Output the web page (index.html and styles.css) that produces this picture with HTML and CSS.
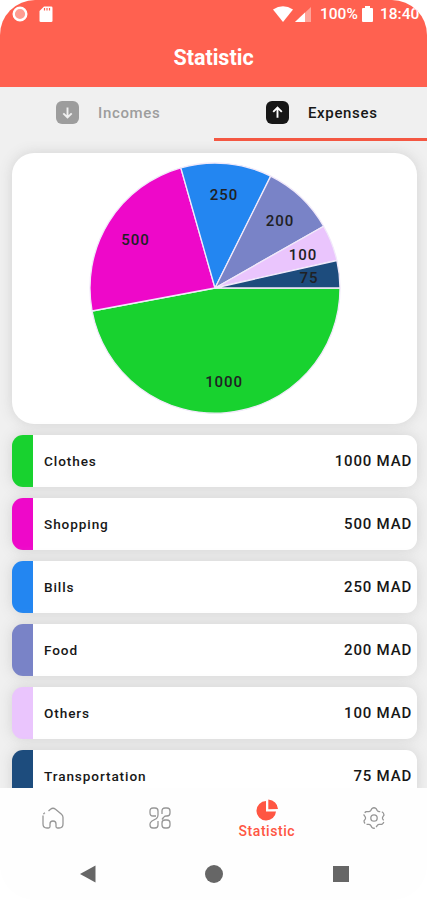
FILE: index.html
```html
<!DOCTYPE html>
<html lang="en">
<head>
<meta charset="utf-8">
<title>Statistic</title>
<link rel="stylesheet" href="styles.css">
</head>
<body>
<div class="phone">
  <header class="header">
    <div class="status">
      <svg width="16" height="16" viewBox="0 0 16 16"><circle cx="8" cy="8" r="6.3" fill="#ff9d92" stroke="#fff" stroke-width="2.4"/></svg>
      <svg class="sd" width="14" height="17" viewBox="0 0 14 17"><path d="M5 .5h7.2q1.3 0 1.3 1.3v12.9q0 1.3-1.3 1.3H1.8Q.5 16 .5 14.700V5z" fill="#fff"/><path d="M5.500 2v2.500M8 2v2.500M10.500 2v2.500" stroke="#ff6150" stroke-width="1.200"/></svg>
      <span class="spacer"></span>
      <svg width="20" height="16" viewBox="0 0 20 16"><path d="M0 3.500Q10-3 20 3.500L10 16z" fill="#fff"/></svg>
      <svg class="signal" width="16" height="15" viewBox="0 0 16 15"><path d="M16 0v15H0z" fill="#ffa398"/><path d="M10 5.600V15H0z" fill="#fff"/></svg>
      <span class="battery-text">100%</span>
      <svg class="battery" width="11" height="16" viewBox="0 0 11 16"><path d="M3 0h5v2h2q1 0 1 1v12q0 1-1 1H1q-1 0-1-1V3q0-1 1-1h2z" fill="#fff"/></svg>
      <span class="clock">18:40</span>
    </div>
    <h1 class="title">Statistic</h1>
  </header>
  <nav class="tabs">
    <div class="tab"><svg width="23" height="23" viewBox="0 0 23 23"><rect width="23" height="23" rx="6" fill="#9d9d9d"/><path d="M11.500 6.500v10M7.300 12.300l4.200 4.200 4.200-4.200" fill="none" stroke="#f0f0f0" stroke-width="1.900"/></svg><span>Incomes</span></div>
    <div class="tab active"><svg width="23" height="23" viewBox="0 0 23 23"><rect width="23" height="23" rx="6" fill="#171717"/><path d="M11.500 16.800V6.500M7.200 10.800l4.300-4.300 4.300 4.300" fill="none" stroke="#fff" stroke-width="1.900"/></svg><span>Expenses</span></div>
  </nav>
  <main class="content">
    <section class="chart">
      <svg width="252" height="252" viewBox="-126 -126 252 252">
        <g stroke="#f1e9fa" stroke-width="1.300" stroke-linejoin="bevel">
          <path fill="#18d22f" d="M0 0H125A125 125 0 0 1-122.900 23z"/>
          <path fill="#ee08c9" d="M0 0L-122.900 23A125 125 0 0 1-34.200-120.200z"/>
          <path fill="#2386f1" d="M0 0L-34.200-120.200A125 125 0 0 1 55.700-111.900z"/>
          <path fill="#7983c7" d="M0 0L55.700-111.900A125 125 0 0 1 108.600-61.800z"/>
          <path fill="#eac5fd" d="M0 0L108.600-61.800A125 125 0 0 1 121.900-27.500z"/>
          <path fill="#1d4c7d" d="M0 0L121.900-27.500A125 125 0 0 1 125 0z"/>
        </g>
        <g class="values">
          <text x="9" y="99">1000</text>
          <text x="-79.500" y="-43.500">500</text>
          <text x="9" y="-88">250</text>
          <text x="65" y="-62.500">200</text>
          <text x="88" y="-28.500">100</text>
          <text x="94" y="-5">75</text>
        </g>
      </svg>
    </section>
    <div class="row clothes"><span>Clothes</span><span class="amount">1000 MAD</span></div>
    <div class="row shopping"><span>Shopping</span><span class="amount">500 MAD</span></div>
    <div class="row bills"><span>Bills</span><span class="amount">250 MAD</span></div>
    <div class="row food"><span>Food</span><span class="amount">200 MAD</span></div>
    <div class="row others"><span>Others</span><span class="amount">100 MAD</span></div>
    <div class="row transport"><span>Transportation</span><span class="amount">75 MAD</span></div>
  </main>
  <nav class="bottom">
    <div class="item"><svg width="24" height="24" viewBox="0 0 24 24"><path d="M2 9.500V18q0 4 4 4h1.500q1.500 0 1.500-1.500V18q0-3 3-3t3 3v2.500q0 1.500 1.500 1.500H18q4 0 4-4v-6.500q0-2-1.500-3.300l-6-5Q12 1.300 9.500 3.200L7.500 5M2.500 8.300q.3-.8 1.500-1.500"/></svg></div>
    <div class="item"><svg width="24" height="24" viewBox="0 0 24 24"><path d="M8 10H5Q2 10 2 7V5q0-3 3-3h2q3 0 3 3v4q0 2-1.500 3.500L4 15q-2 1.500-2 3v1q0 3 3 3h2q3 0 3-3v-4M14 8V5q0-3 3-3h2q3 0 3 3v2q0 3-3 3h-1q-1.500 0-2.500 1.500L14 13.500M17 14h2q3 0 3 3v2q0 3-3 3h-2q-3 0-3-3v-2q0-3 3-3z"/></svg></div>
    <div class="item selected"><svg width="23" height="23" viewBox="0 0 23 23"><path d="M10 2v10.500h10A9.800 9.800 0 1 1 10 2zM12.300.5Q21 1.500 22 10l-9.700.2z"/></svg><span>Statistic</span></div>
    <div class="item"><svg width="24" height="24" viewBox="0 0 24 24"><circle cx="12" cy="12" r="3.200"/><path d="M10 2.500q2-1.500 4 0l1.300 2.200q.7 1 2 1h2.500q2 1 2.200 3.300l-1.300 2q-.5 1 0 2l1.300 2q-.2 2.300-2.200 3.300h-2.500q-1.300 0-2 1L14 21.500q-2 1.500-4 0l-1.300-2.200q-.7-1-2-1H4.200Q2.200 17.300 2 15l1.300-2q.5-1 0-2L2 9q.2-2.300 2.200-3.300h2.500q1.300 0 2-1z" stroke-dasharray="10 1.600"/></svg></div>
  </nav>
  <nav class="system">
    <div><svg width="16" height="18" viewBox="0 0 16 18"><path d="M15.500.5v17L0 9z"/></svg></div>
    <div><svg width="18" height="18" viewBox="0 0 18 18"><circle cx="9" cy="9" r="9"/></svg></div>
    <div><svg width="16" height="16" viewBox="0 0 16 16"><path d="M0 0h16v16H0z"/></svg></div>
  </nav>
</div>
</body>
</html>
```
FILE: styles.css
```css
* { box-sizing: border-box; }
body { margin: 0; background: #fff; font-family: Roboto, sans-serif; color: #171717; }
svg { display: block; flex: none; }
.phone { width: 427px; height: 900px; display: flex; flex-direction: column; overflow: hidden; border-radius: 35px; background: #fefefe; }
.header { height: 87px; flex: none; background: #ff6150; color: #fff; }
.status { height: 28px; display: flex; align-items: center; padding: 0 8px 0 12px; font-size: 15.5px; font-weight: 500; }
.sd { margin-left: 11px; }
.spacer { flex: 1; }
.signal { margin-left: 2px; }
.battery-text { margin-left: 9px; width: 37px; white-space: nowrap; }
.battery { margin-left: 5px; }
.clock { margin-left: 7px; width: 39px; white-space: nowrap; }
.title { margin: 15px 0 0; text-align: center; font-size: 21.500px; line-height: 30px; font-weight: 700; }
.tabs { height: 54px; flex: none; display: flex; background: #f0f0f0; }
.tab { flex: 1 1 0; min-width: 0; display: flex; align-items: center; gap: 19px; padding-left: 56px; color: #9d9d9d; font-size: 15px; font-weight: 500; letter-spacing: .65px; border-bottom: 3px solid transparent; }
.tab:first-child { flex: 0 0 214px; }
.tab.active { color: #171717; padding-left: 52px; border-color: #f45742; }
.content { flex: 1; min-height: 0; overflow: hidden; padding: 12px 10px 0 12px; background: #f0f0f0; display: flex; flex-direction: column; gap: 11px; }
.chart { height: 271px; flex: none; display: flex; justify-content: center; padding-top: 9px; background: #fff; border-radius: 22px; box-shadow: 0 0 14px #d2d2d2; }
.values { font-size: 15px; font-weight: 500; letter-spacing: .9px; text-anchor: middle; fill: #202124; }
.row { height: 52px; flex: none; display: flex; align-items: center; justify-content: space-between; padding: 0 5px 1px 11px; background: #fff; border-left: 21px solid; border-radius: 11px; box-shadow: 0 0 14px #d2d2d2; font-size: 13.6px; font-weight: 500; letter-spacing: .9px; }
.amount { font-size: 15px; letter-spacing: .8px; }
.clothes { border-color: #18d22f; }
.shopping { border-color: #ee08c9; }
.bills { border-color: #2386f1; }
.food { border-color: #7983c7; }
.others { border-color: #eac5fd; }
.transport { border-color: #1d4c7d; }
.bottom { height: 60px; flex: none; display: flex; background: #fefefe; }
.item { flex: 1; display: flex; flex-direction: column; align-items: center; justify-content: center; fill: none; stroke: #969696; stroke-width: 1.300; }
.selected { color: #ff5643; fill: #ff5643; stroke: none; font-size: 14px; line-height: 18px; font-weight: 500; letter-spacing: .55px; gap: 0; padding-top: 3px; }
.selected svg { margin-left: 2px; }
.system { height: 52px; flex: none; display: grid; grid-template-columns: 1fr 76px 1fr; align-items: center; fill: #666; }
.system div { display: flex; justify-content: center; }
.system div:last-child { padding-left: 3px; }
```
